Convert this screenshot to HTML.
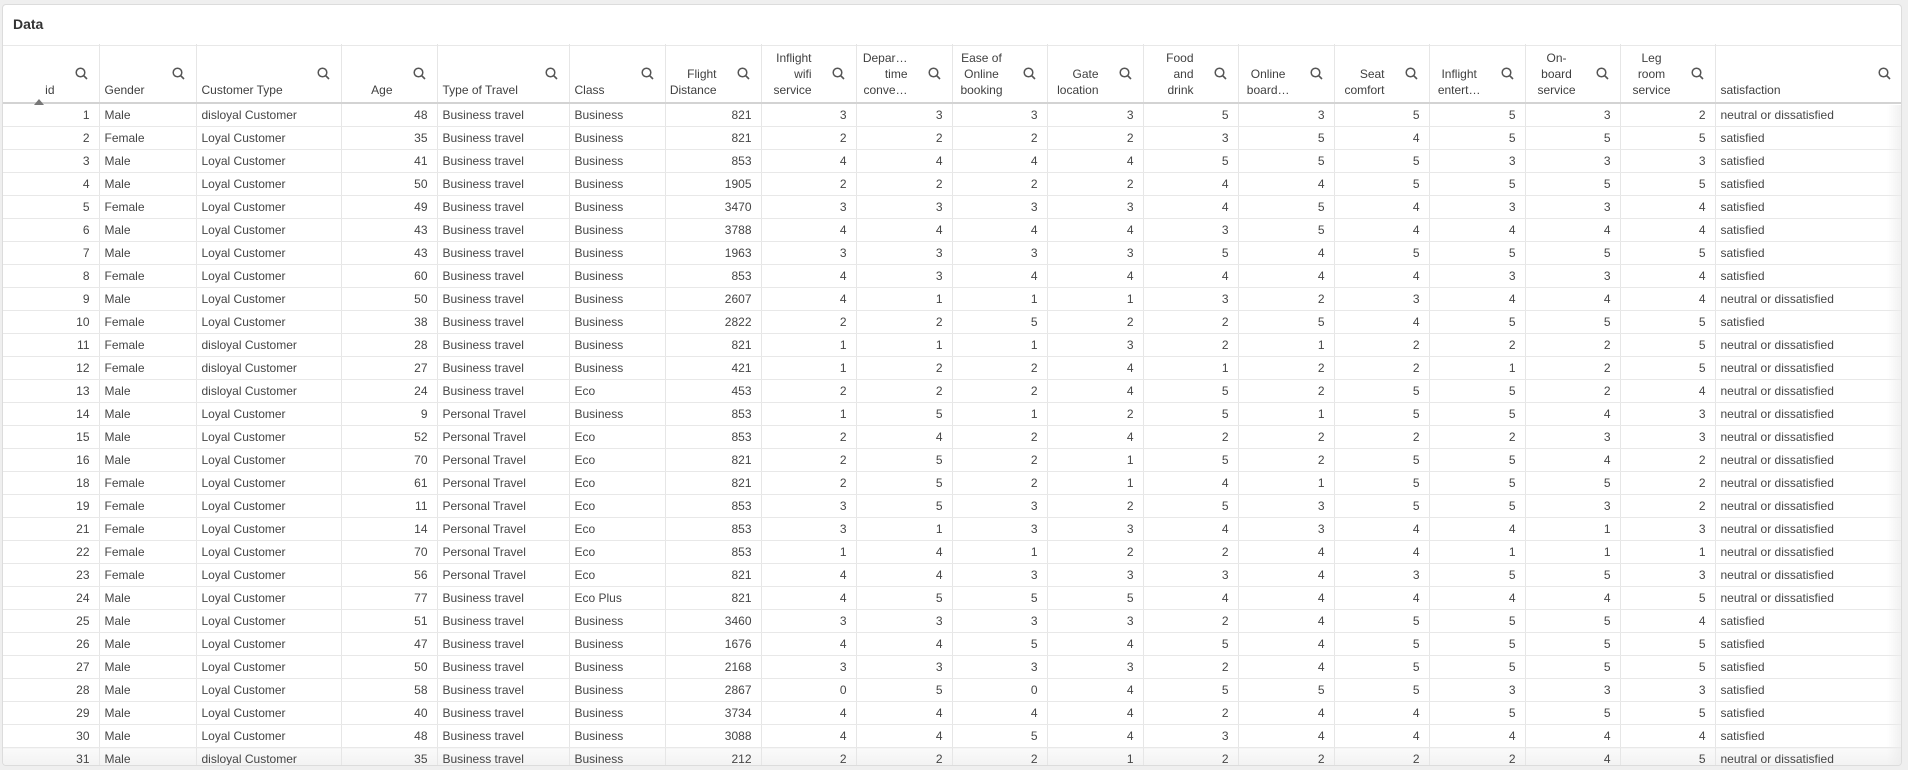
<!DOCTYPE html>
<html><head><meta charset="utf-8">
<style>
html,body{margin:0;padding:0;background:#efefef;width:1908px;height:770px;overflow:hidden}
body{font-family:"Liberation Sans",sans-serif;font-size:12px;color:#404040}
.panel{position:absolute;left:2px;top:4px;width:1900px;height:762px;background:#fff;border:1px solid #dcdcdc;border-radius:4px;box-sizing:border-box;overflow:hidden}
.title{position:absolute;left:10px;top:11px;font-family:"Liberation Sans",sans-serif;font-size:14px;font-weight:bold;color:#333}
.tline{position:absolute;left:0;top:40px;width:100%;height:1px;background:#e8e8e8}
table{position:absolute;left:-1px;top:39px;border-collapse:collapse;table-layout:fixed;width:1900px}
th{height:58px;padding:0;position:relative;font-weight:normal;border-right:1px solid #e6e6e6;border-bottom:2px solid #d3d3d3;vertical-align:bottom}
th .l{position:absolute;bottom:4px;line-height:16px}
th .r{right:44px;text-align:right}
th .lf{left:5px;text-align:left}
th svg{position:absolute;right:11px;top:23px}
td{height:22px;padding:0 9px 0 5px;border-right:1px solid #e6e6e6;border-bottom:1px solid #e8e8e8;text-align:right;white-space:nowrap;overflow:hidden;line-height:22px;color:#454545}
td.t{text-align:left}
tr.last td{background:linear-gradient(#fafafa,#f0f0f0)}
.fade{position:absolute;right:0;top:100px;width:14px;height:662px;background:linear-gradient(90deg,rgba(255,255,255,0),rgba(235,235,235,0.7))}
.tri{position:absolute;left:32px;bottom:-3px;width:0;height:0;border-left:5px solid transparent;border-right:5px solid transparent;border-bottom:6px solid #777}
</style></head><body>
<div class="panel">
<div class="title">Data</div>
<div class="tline"></div>
<table>
<colgroup><col style="width:97px"><col style="width:97px"><col style="width:145px"><col style="width:96px"><col style="width:132px"><col style="width:96px"><col style="width:96px"><col style="width:95px"><col style="width:96px"><col style="width:95px"><col style="width:96px"><col style="width:95px"><col style="width:96px"><col style="width:95px"><col style="width:96px"><col style="width:95px"><col style="width:95px"><col style="width:187px"></colgroup>
<thead><tr>
<th><span class="l r">id</span><span class="tri"></span><svg width="13" height="13" viewBox="0 0 13 13"><circle cx="5.5" cy="5.5" r="4.3" fill="none" stroke="#555" stroke-width="1.5"/><path d="M8.6 8.6L12 12" stroke="#555" stroke-width="1.6"/></svg></th>
<th><span class="l lf">Gender</span><svg width="13" height="13" viewBox="0 0 13 13"><circle cx="5.5" cy="5.5" r="4.3" fill="none" stroke="#555" stroke-width="1.5"/><path d="M8.6 8.6L12 12" stroke="#555" stroke-width="1.6"/></svg></th>
<th><span class="l lf">Customer Type</span><svg width="13" height="13" viewBox="0 0 13 13"><circle cx="5.5" cy="5.5" r="4.3" fill="none" stroke="#555" stroke-width="1.5"/><path d="M8.6 8.6L12 12" stroke="#555" stroke-width="1.6"/></svg></th>
<th><span class="l r">Age</span><svg width="13" height="13" viewBox="0 0 13 13"><circle cx="5.5" cy="5.5" r="4.3" fill="none" stroke="#555" stroke-width="1.5"/><path d="M8.6 8.6L12 12" stroke="#555" stroke-width="1.6"/></svg></th>
<th><span class="l lf">Type of Travel</span><svg width="13" height="13" viewBox="0 0 13 13"><circle cx="5.5" cy="5.5" r="4.3" fill="none" stroke="#555" stroke-width="1.5"/><path d="M8.6 8.6L12 12" stroke="#555" stroke-width="1.6"/></svg></th>
<th><span class="l lf">Class</span><svg width="13" height="13" viewBox="0 0 13 13"><circle cx="5.5" cy="5.5" r="4.3" fill="none" stroke="#555" stroke-width="1.5"/><path d="M8.6 8.6L12 12" stroke="#555" stroke-width="1.6"/></svg></th>
<th><span class="l r">Flight<br>Distance</span><svg width="13" height="13" viewBox="0 0 13 13"><circle cx="5.5" cy="5.5" r="4.3" fill="none" stroke="#555" stroke-width="1.5"/><path d="M8.6 8.6L12 12" stroke="#555" stroke-width="1.6"/></svg></th>
<th><span class="l r">Inflight<br>wifi<br>service</span><svg width="13" height="13" viewBox="0 0 13 13"><circle cx="5.5" cy="5.5" r="4.3" fill="none" stroke="#555" stroke-width="1.5"/><path d="M8.6 8.6L12 12" stroke="#555" stroke-width="1.6"/></svg></th>
<th><span class="l r">Depar…<br>time<br>conve…</span><svg width="13" height="13" viewBox="0 0 13 13"><circle cx="5.5" cy="5.5" r="4.3" fill="none" stroke="#555" stroke-width="1.5"/><path d="M8.6 8.6L12 12" stroke="#555" stroke-width="1.6"/></svg></th>
<th><span class="l r" style="text-align:center">Ease of<br>Online<br>booking</span><svg width="13" height="13" viewBox="0 0 13 13"><circle cx="5.5" cy="5.5" r="4.3" fill="none" stroke="#555" stroke-width="1.5"/><path d="M8.6 8.6L12 12" stroke="#555" stroke-width="1.6"/></svg></th>
<th><span class="l r">Gate<br>location</span><svg width="13" height="13" viewBox="0 0 13 13"><circle cx="5.5" cy="5.5" r="4.3" fill="none" stroke="#555" stroke-width="1.5"/><path d="M8.6 8.6L12 12" stroke="#555" stroke-width="1.6"/></svg></th>
<th><span class="l r">Food<br>and<br>drink</span><svg width="13" height="13" viewBox="0 0 13 13"><circle cx="5.5" cy="5.5" r="4.3" fill="none" stroke="#555" stroke-width="1.5"/><path d="M8.6 8.6L12 12" stroke="#555" stroke-width="1.6"/></svg></th>
<th><span class="l r" style="text-align:center">Online<br>board…</span><svg width="13" height="13" viewBox="0 0 13 13"><circle cx="5.5" cy="5.5" r="4.3" fill="none" stroke="#555" stroke-width="1.5"/><path d="M8.6 8.6L12 12" stroke="#555" stroke-width="1.6"/></svg></th>
<th><span class="l r">Seat<br>comfort</span><svg width="13" height="13" viewBox="0 0 13 13"><circle cx="5.5" cy="5.5" r="4.3" fill="none" stroke="#555" stroke-width="1.5"/><path d="M8.6 8.6L12 12" stroke="#555" stroke-width="1.6"/></svg></th>
<th><span class="l r" style="text-align:center">Inflight<br>entert…</span><svg width="13" height="13" viewBox="0 0 13 13"><circle cx="5.5" cy="5.5" r="4.3" fill="none" stroke="#555" stroke-width="1.5"/><path d="M8.6 8.6L12 12" stroke="#555" stroke-width="1.6"/></svg></th>
<th><span class="l r" style="text-align:center">On-<br>board<br>service</span><svg width="13" height="13" viewBox="0 0 13 13"><circle cx="5.5" cy="5.5" r="4.3" fill="none" stroke="#555" stroke-width="1.5"/><path d="M8.6 8.6L12 12" stroke="#555" stroke-width="1.6"/></svg></th>
<th><span class="l r" style="text-align:center">Leg<br>room<br>service</span><svg width="13" height="13" viewBox="0 0 13 13"><circle cx="5.5" cy="5.5" r="4.3" fill="none" stroke="#555" stroke-width="1.5"/><path d="M8.6 8.6L12 12" stroke="#555" stroke-width="1.6"/></svg></th>
<th style="border-right:none"><span class="l lf">satisfaction</span><svg width="13" height="13" viewBox="0 0 13 13"><circle cx="5.5" cy="5.5" r="4.3" fill="none" stroke="#555" stroke-width="1.5"/><path d="M8.6 8.6L12 12" stroke="#555" stroke-width="1.6"/></svg></th>
</tr></thead>
<tbody>
<tr><td>1</td><td class="t">Male</td><td class="t">disloyal Customer</td><td>48</td><td class="t">Business travel</td><td class="t">Business</td><td>821</td><td>3</td><td>3</td><td>3</td><td>3</td><td>5</td><td>3</td><td>5</td><td>5</td><td>3</td><td>2</td><td class="t">neutral or dissatisfied</td></tr>
<tr><td>2</td><td class="t">Female</td><td class="t">Loyal Customer</td><td>35</td><td class="t">Business travel</td><td class="t">Business</td><td>821</td><td>2</td><td>2</td><td>2</td><td>2</td><td>3</td><td>5</td><td>4</td><td>5</td><td>5</td><td>5</td><td class="t">satisfied</td></tr>
<tr><td>3</td><td class="t">Male</td><td class="t">Loyal Customer</td><td>41</td><td class="t">Business travel</td><td class="t">Business</td><td>853</td><td>4</td><td>4</td><td>4</td><td>4</td><td>5</td><td>5</td><td>5</td><td>3</td><td>3</td><td>3</td><td class="t">satisfied</td></tr>
<tr><td>4</td><td class="t">Male</td><td class="t">Loyal Customer</td><td>50</td><td class="t">Business travel</td><td class="t">Business</td><td>1905</td><td>2</td><td>2</td><td>2</td><td>2</td><td>4</td><td>4</td><td>5</td><td>5</td><td>5</td><td>5</td><td class="t">satisfied</td></tr>
<tr><td>5</td><td class="t">Female</td><td class="t">Loyal Customer</td><td>49</td><td class="t">Business travel</td><td class="t">Business</td><td>3470</td><td>3</td><td>3</td><td>3</td><td>3</td><td>4</td><td>5</td><td>4</td><td>3</td><td>3</td><td>4</td><td class="t">satisfied</td></tr>
<tr><td>6</td><td class="t">Male</td><td class="t">Loyal Customer</td><td>43</td><td class="t">Business travel</td><td class="t">Business</td><td>3788</td><td>4</td><td>4</td><td>4</td><td>4</td><td>3</td><td>5</td><td>4</td><td>4</td><td>4</td><td>4</td><td class="t">satisfied</td></tr>
<tr><td>7</td><td class="t">Male</td><td class="t">Loyal Customer</td><td>43</td><td class="t">Business travel</td><td class="t">Business</td><td>1963</td><td>3</td><td>3</td><td>3</td><td>3</td><td>5</td><td>4</td><td>5</td><td>5</td><td>5</td><td>5</td><td class="t">satisfied</td></tr>
<tr><td>8</td><td class="t">Female</td><td class="t">Loyal Customer</td><td>60</td><td class="t">Business travel</td><td class="t">Business</td><td>853</td><td>4</td><td>3</td><td>4</td><td>4</td><td>4</td><td>4</td><td>4</td><td>3</td><td>3</td><td>4</td><td class="t">satisfied</td></tr>
<tr><td>9</td><td class="t">Male</td><td class="t">Loyal Customer</td><td>50</td><td class="t">Business travel</td><td class="t">Business</td><td>2607</td><td>4</td><td>1</td><td>1</td><td>1</td><td>3</td><td>2</td><td>3</td><td>4</td><td>4</td><td>4</td><td class="t">neutral or dissatisfied</td></tr>
<tr><td>10</td><td class="t">Female</td><td class="t">Loyal Customer</td><td>38</td><td class="t">Business travel</td><td class="t">Business</td><td>2822</td><td>2</td><td>2</td><td>5</td><td>2</td><td>2</td><td>5</td><td>4</td><td>5</td><td>5</td><td>5</td><td class="t">satisfied</td></tr>
<tr><td>11</td><td class="t">Female</td><td class="t">disloyal Customer</td><td>28</td><td class="t">Business travel</td><td class="t">Business</td><td>821</td><td>1</td><td>1</td><td>1</td><td>3</td><td>2</td><td>1</td><td>2</td><td>2</td><td>2</td><td>5</td><td class="t">neutral or dissatisfied</td></tr>
<tr><td>12</td><td class="t">Female</td><td class="t">disloyal Customer</td><td>27</td><td class="t">Business travel</td><td class="t">Business</td><td>421</td><td>1</td><td>2</td><td>2</td><td>4</td><td>1</td><td>2</td><td>2</td><td>1</td><td>2</td><td>5</td><td class="t">neutral or dissatisfied</td></tr>
<tr><td>13</td><td class="t">Male</td><td class="t">disloyal Customer</td><td>24</td><td class="t">Business travel</td><td class="t">Eco</td><td>453</td><td>2</td><td>2</td><td>2</td><td>4</td><td>5</td><td>2</td><td>5</td><td>5</td><td>2</td><td>4</td><td class="t">neutral or dissatisfied</td></tr>
<tr><td>14</td><td class="t">Male</td><td class="t">Loyal Customer</td><td>9</td><td class="t">Personal Travel</td><td class="t">Business</td><td>853</td><td>1</td><td>5</td><td>1</td><td>2</td><td>5</td><td>1</td><td>5</td><td>5</td><td>4</td><td>3</td><td class="t">neutral or dissatisfied</td></tr>
<tr><td>15</td><td class="t">Male</td><td class="t">Loyal Customer</td><td>52</td><td class="t">Personal Travel</td><td class="t">Eco</td><td>853</td><td>2</td><td>4</td><td>2</td><td>4</td><td>2</td><td>2</td><td>2</td><td>2</td><td>3</td><td>3</td><td class="t">neutral or dissatisfied</td></tr>
<tr><td>16</td><td class="t">Male</td><td class="t">Loyal Customer</td><td>70</td><td class="t">Personal Travel</td><td class="t">Eco</td><td>821</td><td>2</td><td>5</td><td>2</td><td>1</td><td>5</td><td>2</td><td>5</td><td>5</td><td>4</td><td>2</td><td class="t">neutral or dissatisfied</td></tr>
<tr><td>18</td><td class="t">Female</td><td class="t">Loyal Customer</td><td>61</td><td class="t">Personal Travel</td><td class="t">Eco</td><td>821</td><td>2</td><td>5</td><td>2</td><td>1</td><td>4</td><td>1</td><td>5</td><td>5</td><td>5</td><td>2</td><td class="t">neutral or dissatisfied</td></tr>
<tr><td>19</td><td class="t">Female</td><td class="t">Loyal Customer</td><td>11</td><td class="t">Personal Travel</td><td class="t">Eco</td><td>853</td><td>3</td><td>5</td><td>3</td><td>2</td><td>5</td><td>3</td><td>5</td><td>5</td><td>3</td><td>2</td><td class="t">neutral or dissatisfied</td></tr>
<tr><td>21</td><td class="t">Female</td><td class="t">Loyal Customer</td><td>14</td><td class="t">Personal Travel</td><td class="t">Eco</td><td>853</td><td>3</td><td>1</td><td>3</td><td>3</td><td>4</td><td>3</td><td>4</td><td>4</td><td>1</td><td>3</td><td class="t">neutral or dissatisfied</td></tr>
<tr><td>22</td><td class="t">Female</td><td class="t">Loyal Customer</td><td>70</td><td class="t">Personal Travel</td><td class="t">Eco</td><td>853</td><td>1</td><td>4</td><td>1</td><td>2</td><td>2</td><td>4</td><td>4</td><td>1</td><td>1</td><td>1</td><td class="t">neutral or dissatisfied</td></tr>
<tr><td>23</td><td class="t">Female</td><td class="t">Loyal Customer</td><td>56</td><td class="t">Personal Travel</td><td class="t">Eco</td><td>821</td><td>4</td><td>4</td><td>3</td><td>3</td><td>3</td><td>4</td><td>3</td><td>5</td><td>5</td><td>3</td><td class="t">neutral or dissatisfied</td></tr>
<tr><td>24</td><td class="t">Male</td><td class="t">Loyal Customer</td><td>77</td><td class="t">Business travel</td><td class="t">Eco Plus</td><td>821</td><td>4</td><td>5</td><td>5</td><td>5</td><td>4</td><td>4</td><td>4</td><td>4</td><td>4</td><td>5</td><td class="t">neutral or dissatisfied</td></tr>
<tr><td>25</td><td class="t">Male</td><td class="t">Loyal Customer</td><td>51</td><td class="t">Business travel</td><td class="t">Business</td><td>3460</td><td>3</td><td>3</td><td>3</td><td>3</td><td>2</td><td>4</td><td>5</td><td>5</td><td>5</td><td>4</td><td class="t">satisfied</td></tr>
<tr><td>26</td><td class="t">Male</td><td class="t">Loyal Customer</td><td>47</td><td class="t">Business travel</td><td class="t">Business</td><td>1676</td><td>4</td><td>4</td><td>5</td><td>4</td><td>5</td><td>4</td><td>5</td><td>5</td><td>5</td><td>5</td><td class="t">satisfied</td></tr>
<tr><td>27</td><td class="t">Male</td><td class="t">Loyal Customer</td><td>50</td><td class="t">Business travel</td><td class="t">Business</td><td>2168</td><td>3</td><td>3</td><td>3</td><td>3</td><td>2</td><td>4</td><td>5</td><td>5</td><td>5</td><td>5</td><td class="t">satisfied</td></tr>
<tr><td>28</td><td class="t">Male</td><td class="t">Loyal Customer</td><td>58</td><td class="t">Business travel</td><td class="t">Business</td><td>2867</td><td>0</td><td>5</td><td>0</td><td>4</td><td>5</td><td>5</td><td>5</td><td>3</td><td>3</td><td>3</td><td class="t">satisfied</td></tr>
<tr><td>29</td><td class="t">Male</td><td class="t">Loyal Customer</td><td>40</td><td class="t">Business travel</td><td class="t">Business</td><td>3734</td><td>4</td><td>4</td><td>4</td><td>4</td><td>2</td><td>4</td><td>4</td><td>5</td><td>5</td><td>5</td><td class="t">satisfied</td></tr>
<tr><td>30</td><td class="t">Male</td><td class="t">Loyal Customer</td><td>48</td><td class="t">Business travel</td><td class="t">Business</td><td>3088</td><td>4</td><td>4</td><td>5</td><td>4</td><td>3</td><td>4</td><td>4</td><td>4</td><td>4</td><td>4</td><td class="t">satisfied</td></tr>
<tr class="last"><td>31</td><td class="t">Male</td><td class="t">disloyal Customer</td><td>35</td><td class="t">Business travel</td><td class="t">Business</td><td>212</td><td>2</td><td>2</td><td>2</td><td>1</td><td>2</td><td>2</td><td>2</td><td>2</td><td>4</td><td>5</td><td class="t">neutral or dissatisfied</td></tr>
</tbody></table>
<div class="fade"></div>
</div>
</body></html>
